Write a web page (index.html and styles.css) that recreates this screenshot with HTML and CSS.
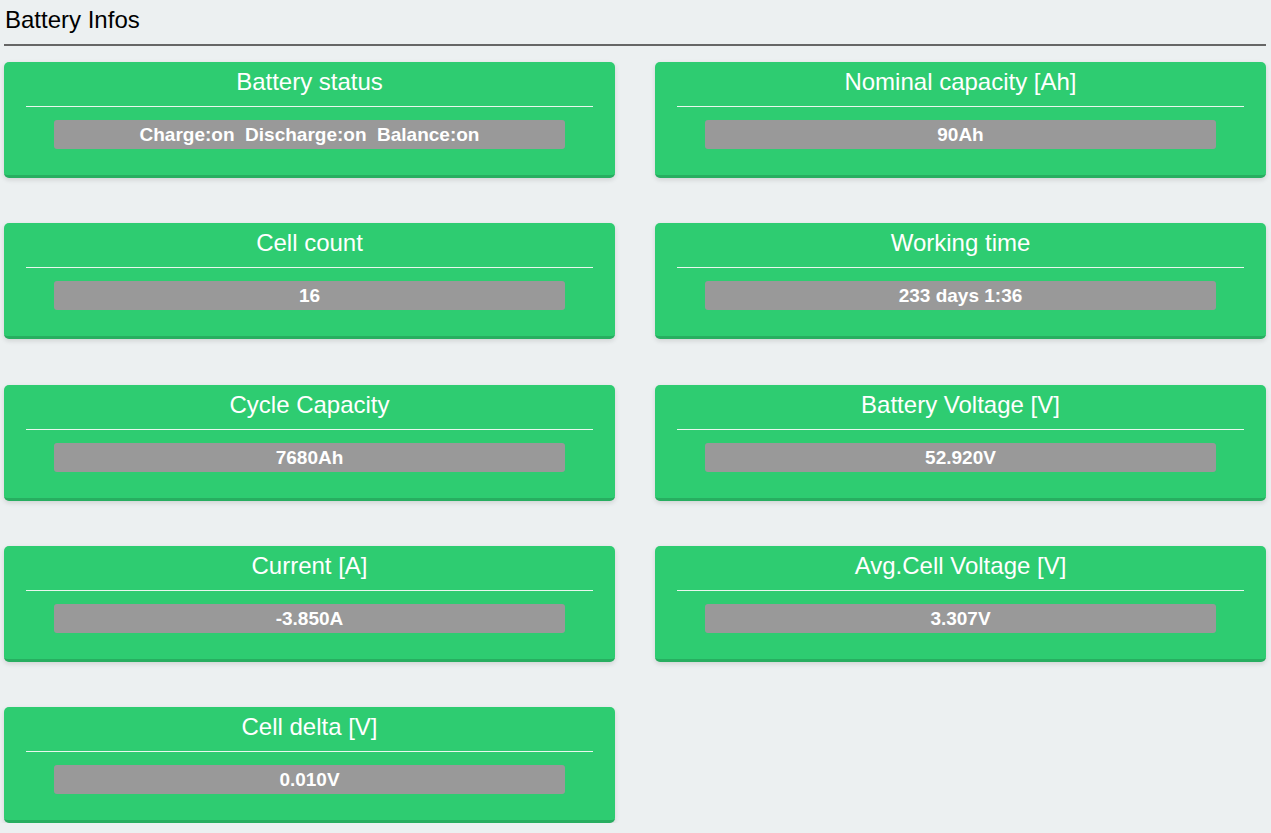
FILE: index.html
```html
<!DOCTYPE html>
<html>
<head>
<meta charset="utf-8">
<link rel="stylesheet" href="styles.css">
</head>
<body>
<div class="page">
  <h1 class="page-title">Battery Infos</h1>
  <div class="grid">
    <div class="card"><div class="card-title">Battery status</div><div class="card-sep"></div><div class="card-value">Charge:on&nbsp; Discharge:on&nbsp; Balance:on</div></div>
    <div class="card"><div class="card-title">Nominal capacity [Ah]</div><div class="card-sep"></div><div class="card-value">90Ah</div></div>
    <div class="card"><div class="card-title">Cell count</div><div class="card-sep"></div><div class="card-value">16</div></div>
    <div class="card"><div class="card-title">Working time</div><div class="card-sep"></div><div class="card-value">233 days 1:36</div></div>
    <div class="card"><div class="card-title">Cycle Capacity</div><div class="card-sep"></div><div class="card-value">7680Ah</div></div>
    <div class="card"><div class="card-title">Battery Voltage [V]</div><div class="card-sep"></div><div class="card-value">52.920V</div></div>
    <div class="card"><div class="card-title">Current [A]</div><div class="card-sep"></div><div class="card-value">-3.850A</div></div>
    <div class="card"><div class="card-title">Avg.Cell Voltage [V]</div><div class="card-sep"></div><div class="card-value">3.307V</div></div>
    <div class="card"><div class="card-title">Cell delta [V]</div><div class="card-sep"></div><div class="card-value">0.010V</div></div>
  </div>
</div>
</body>
</html>
```
FILE: styles.css
```css
html, body {
  margin: 0;
  padding: 0;
  background: #ecf0f1;
  font-family: "Liberation Sans", Arial, sans-serif;
}
.page {
  padding: 0 5px 0 4px;
}
.page-title {
  margin: 0;
  font-size: 24px;
  font-weight: normal;
  color: #000;
  line-height: 28px;
  padding: 6px 0 10px 1px;
  border-bottom: 2px solid #666;
}
.grid {
  display: grid;
  grid-template-columns: 1fr 1fr;
  column-gap: 40px;
  row-gap: 45.3px;
  margin-top: 16px;
}
.card {
  background: #2ecc71;
  border-bottom: 3px solid #27ae60;
  border-radius: 5px;
  box-shadow: 0 2px 5px rgba(0,0,0,0.12);
  padding: 6px 22px 26px;
  color: #fff;
  height: 116px;
  box-sizing: border-box;
}
.card-title {
  text-align: center;
  font-size: 24px;
  line-height: 28px;
}
.card-sep {
  height: 1px;
  background: #e8f8ee;
  margin-top: 10px;
}
.card-value {
  width: 90%;
  margin: 13px auto 0;
  height: 29px;
  line-height: 29px;
  background: #999;
  border-radius: 3px;
  text-align: center;
  font-weight: bold;
  font-size: 19px;
}
```
